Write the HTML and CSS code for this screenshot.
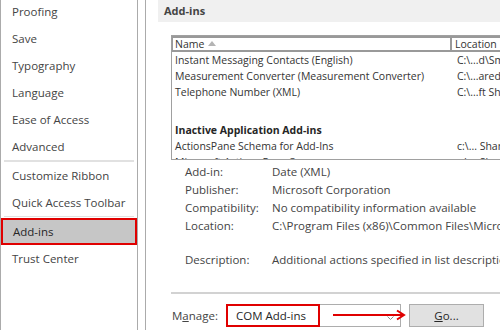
FILE: index.html
```html
<!DOCTYPE html>
<html lang="en">
<head>
    <meta charset="UTF-8">
    <title>Word Options - Add-ins</title>
    <link rel="stylesheet" href="styles.css">
</head>
<body>
    <nav class="nav">
        <div class="nav-item">Proofing</div>
        <div class="nav-item">Save</div>
        <div class="nav-item">Typography</div>
        <div class="nav-item">Language</div>
        <div class="nav-item">Ease of Access</div>
        <div class="nav-item">Advanced</div>
        <div class="nav-sep"></div>
        <div class="nav-item">Customize Ribbon</div>
        <div class="nav-item">Quick Access Toolbar</div>
        <div class="nav-sep thin"></div>
        <div class="nav-item active">Add-ins</div>
        <div class="nav-item">Trust Center</div>
    </nav>

    <main class="pane">
        <div class="section-title">Add-ins</div>

        <div class="list">
            <div class="list-head">
                <div class="col-name">Name
                    <svg class="sort" width="8" height="5" viewBox="0 0 8 5"><polygon points="0,5 4,0 8,5" fill="#b4b4b4"/></svg>
                </div>
                <div class="col-loc">Location</div>
            </div>
            <div class="list-body">
                <div class="row"><span class="col-name">Instant Messaging Contacts (English)</span><span class="col-loc">C:\...d\Smart Tag\IMCONTACT.DLL</span></div>
                <div class="row"><span class="col-name">Measurement Converter (Measurement Converter)</span><span class="col-loc">C:\...ared\Smart Tag\METCONV.DLL</span></div>
                <div class="row"><span class="col-name">Telephone Number (XML)</span><span class="col-loc">C:\...ft Shared\Smart Tag\MOFL.DLL</span></div>
                <div class="row"></div>
                <div class="row group">Inactive Application Add-ins</div>
                <div class="row"><span class="col-name">ActionsPane Schema for Add-Ins</span><span class="col-loc">c:\... Shared\VSTO\ActionsPane3.xsd</span></div>
                <div class="row"><span class="col-name">Microsoft Actions Pane 3</span><span class="col-loc">c:\... Shared\VSTO</span></div>
            </div>
        </div>

        <div class="details">
            <div class="detail"><span class="label">Add-in:</span><span class="value">Date (XML)</span></div>
            <div class="detail"><span class="label">Publisher:</span><span class="value">Microsoft Corporation</span></div>
            <div class="detail"><span class="label">Compatibility:</span><span class="value">No compatibility information available</span></div>
            <div class="detail"><span class="label">Location:</span><span class="value">C:\Program Files (x86)\Common Files\Microsoft Shared\Smart Tag\MOFL.DLL</span></div>
            <div class="detail desc"><span class="label">Description:</span><span class="value">Additional actions specified in list description files.</span></div>
        </div>

        <div class="manage">
            <span class="manage-label">M<u>a</u>nage:</span>
            <div class="dropdown">
                <span class="selected">COM Add-ins</span>
                <svg class="chevron" width="7" height="4" viewBox="0 0 7 4"><polyline points="0.5,0.5 3.5,3.5 6.5,0.5" fill="none" stroke="#8a8a8a"/></svg>
                <svg class="arrow" width="74" height="12" viewBox="0 0 74 12"><line x1="0" y1="6" x2="71" y2="6" stroke="#e00000" stroke-width="2"/><polyline points="64,1.5 71,6 64,10.5" fill="none" stroke="#e00000" stroke-width="2"/></svg>
            </div>
            <button class="btn"><u>G</u>o...</button>
        </div>
    </main>
</body>
</html>
```

FILE: styles.css
```css
* {
    margin: 0;
    padding: 0;
    box-sizing: border-box;
    font-family: 'Open Sans', 'Noto Sans', sans-serif;
}

body {
    width: 500px;
    height: 330px;
    overflow: hidden;
    background-color: #fff;
    color: #444;
    font-size: 11.5px;
    display: flex;
}

/* left navigation */
.nav {
    width: 138px;
    flex-shrink: 0;
    border-left: 1px solid #ababab;
    border-right: 1px solid #ababab;
    margin-top: -2px;
    height: 332px;
}

.nav-item {
    height: 27px;
    line-height: 27px;
    padding-left: 11px;
    color: #444;
    white-space: nowrap;
}

.nav-item.active {
    background-color: #c6c6c6;
    border: 2px solid #e00000;
    line-height: 23px;
    padding-left: 10px;
    color: #262626;
}

.nav-sep {
    height: 2px;
    margin: 0 3px;
    background-color: #e1e1e1;
}

.nav-sep.thin {
    height: 1px;
    margin-bottom: 1px;
}

/* right pane */
.pane {
    flex: 1;
    min-width: 0;
    margin-left: 7px;
    border-left: 1px solid #ababab;
    overflow: hidden;
}

.section-title {
    margin-left: 12px;
    height: 22px;
    line-height: 22px;
    padding-left: 6px;
    background-color: #f0f0f0;
    font-weight: 700;
    font-size: 11px;
    color: #444;
}

.list {
    margin: 13px 0 0 25px;
    width: 400px;
    height: 125px;
    border: 1px solid #a0a0a0;
    border-right: none;
    color: #333;
    font-size: 10.5px;
    overflow: hidden;
}

.list-head {
    display: flex;
    height: 16px;
    border-top: 2px solid #999;
    border-left: 1px solid #999;
    border-bottom: 2px solid #999;
    line-height: 12px;
}

.list-head .col-name {
    width: 279px;
    padding-left: 2px;
    border-right: 2px solid #999;
    display: flex;
    align-items: center;
    gap: 4px;
}

.list-head .col-loc {
    padding-left: 3px;
}

.sort {
    margin-top: -2px;
}

.row {
    display: flex;
    height: 16px;
    line-height: 16px;
    padding-left: 3px;
    white-space: nowrap;
}

.row .col-name {
    width: 280px;
    flex-shrink: 0;
}

.row .col-loc {
    padding-left: 2px;
}

.row.group {
    height: 22px;
    padding-top: 6px;
    font-weight: 700;
    color: #262626;
}

/* details */
.details {
    margin: 3px 0 0 39px;
}

.detail {
    display: flex;
    height: 18px;
    line-height: 18px;
    white-space: nowrap;
}

.detail.desc {
    margin-top: 16px;
}

.label {
    width: 87px;
    flex-shrink: 0;
}

/* manage row */
.manage {
    margin: 23px 0 0 25px;
    border-top: 2px solid #d2d2d2;
    padding-top: 10px;
    display: flex;
    align-items: center;
}

.manage-label {
    width: 55px;
    padding-left: 1px;
}

.dropdown {
    position: relative;
    width: 175px;
    height: 23px;
    border: 1px solid #adadad;
    display: flex;
    align-items: center;
}

.selected {
    height: 23px;
    width: 94px;
    margin: -1px 0 0 -1px;
    align-self: flex-start;
    border: 2px solid #e00000;
    line-height: 19px;
    padding-left: 8px;
    color: #262626;
}

.chevron {
    position: absolute;
    right: 6px;
    top: 11px;
}

.arrow {
    position: absolute;
    left: 106px;
    top: 4px;
}

.btn {
    margin-left: 8px;
    width: 75px;
    height: 23px;
    border: 1px solid #adadad;
    background-color: #e1e1e1;
    color: #262626;
    font-size: 11.5px;
}
```
